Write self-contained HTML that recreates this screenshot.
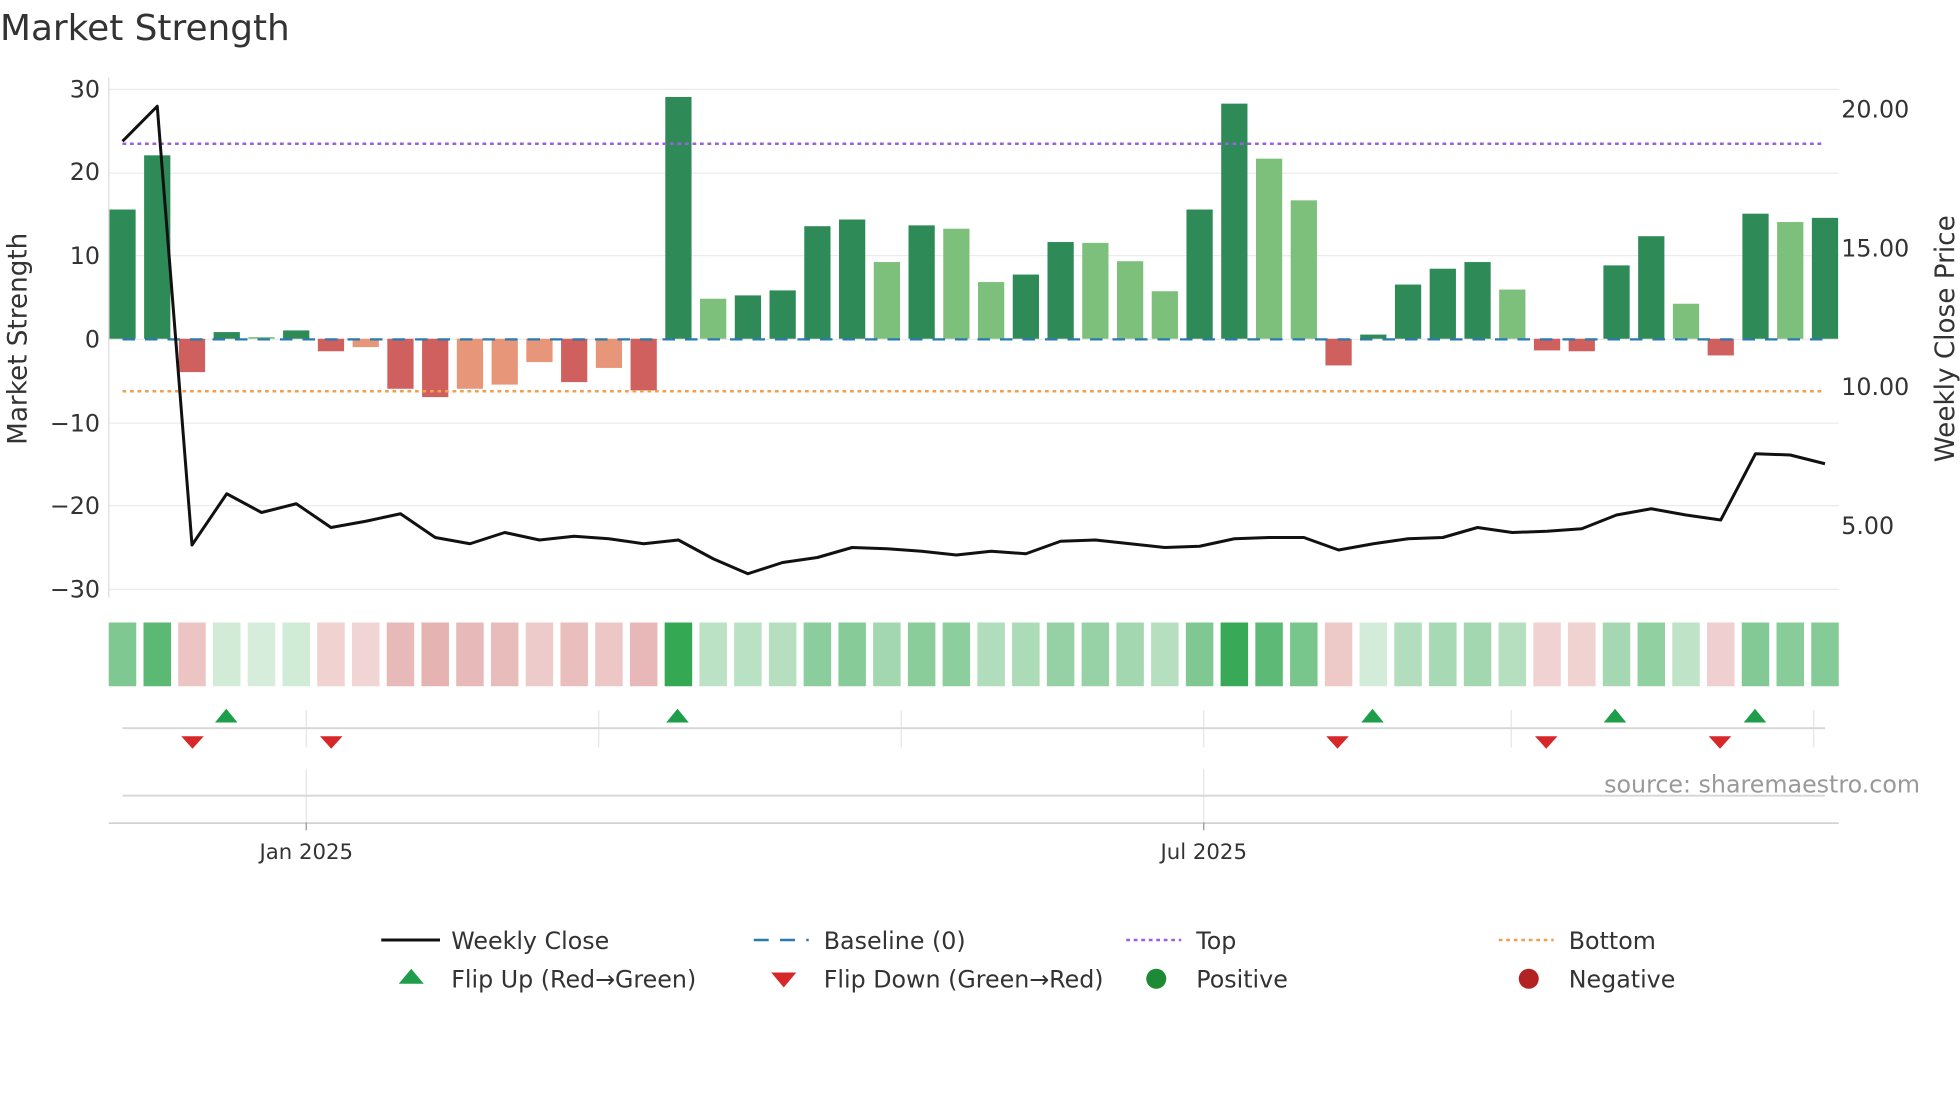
<!DOCTYPE html>
<html><head><meta charset="utf-8"><style>
html,body{margin:0;padding:0;background:#fff;}
svg{display:block;font-family:"DejaVu Sans","Liberation Sans",sans-serif;}
</style></head><body>
<svg id="s" width="1960" height="1102" viewBox="0 0 1568 881.6" xmlns="http://www.w3.org/2000/svg">
<text x="0" y="32" font-size="28.7" fill="#333">Market Strength</text>
<g id="grid" stroke="#ebebeb" stroke-width="1"></g>
<g id="bars"></g>
<line x1="98" x2="1460" y1="115" y2="115" stroke="#9b5fe0" stroke-width="2" stroke-dasharray="3,3"/>
<line x1="98" x2="1460" y1="313" y2="313" stroke="#f0a050" stroke-width="2" stroke-dasharray="3,3"/>
<line x1="98" x2="1460" y1="271.5" y2="271.5" stroke="#2a7ab0" stroke-width="1.8" stroke-dasharray="10,8"/>
<polyline id="price" fill="none" stroke="#111" stroke-width="2.4" stroke-linejoin="round"/>
<line x1="87" x2="87" y1="62" y2="478" stroke="#ddd"/>
<g font-size="19" fill="#333" text-anchor="end">
<text x="80" y="78">30</text><text x="80" y="144">20</text><text x="80" y="211">10</text><text x="80" y="278">0</text>
<text x="80" y="345">−10</text><text x="80" y="411">−20</text><text x="80" y="478">−30</text>
</g>
<g font-size="19" fill="#333">
<text x="1473" y="94">20.00</text><text x="1473" y="205">15.00</text><text x="1473" y="316">10.00</text><text x="1473" y="427">5.00</text>
</g>
<text transform="translate(21,271) rotate(-90)" font-size="21" fill="#333" text-anchor="middle">Market Strength</text>
<text transform="translate(1563,271) rotate(-90)" font-size="21" fill="#333" text-anchor="middle">Weekly Close Price</text>
<g id="heat"></g>
<g stroke="#e6e6e6" stroke-width="1">
<line x1="245" x2="245" y1="568" y2="598"/><line x1="479" x2="479" y1="568" y2="598"/><line x1="721" x2="721" y1="568" y2="598"/>
<line x1="963" x2="963" y1="568" y2="598"/><line x1="1209" x2="1209" y1="568" y2="598"/><line x1="1451" x2="1451" y1="568" y2="598"/>
<line x1="245" x2="245" y1="615" y2="665"/><line x1="963" x2="963" y1="615" y2="665"/>
</g>
<line x1="98" x2="1460" y1="582.5" y2="582.5" stroke="#d6d6d6" stroke-width="1.5"/>
<line x1="98" x2="1460" y1="636.5" y2="636.5" stroke="#d6d6d6" stroke-width="1.5"/>
<line x1="87" x2="1471" y1="658.5" y2="658.5" stroke="#ccc" stroke-width="1.2"/>
<line x1="245" x2="245" y1="658" y2="664" stroke="#999"/><line x1="963" x2="963" y1="658" y2="664" stroke="#999"/>
<g id="flips"></g>
<text x="1536" y="634" font-size="19" fill="#999" text-anchor="end">source: sharemaestro.com</text>
<g font-size="17" fill="#333" text-anchor="middle"><text x="245" y="687">Jan 2025</text><text x="963" y="687">Jul 2025</text></g>
<g font-size="19" fill="#333">
<line x1="305" x2="352" y1="752" y2="752" stroke="#111" stroke-width="2.4"/><text x="361" y="759">Weekly Close</text>
<line x1="603" x2="647" y1="752" y2="752" stroke="#2a7ab0" stroke-width="2" stroke-dasharray="12,9"/><text x="659" y="759">Baseline (0)</text>
<line x1="901" x2="945" y1="752" y2="752" stroke="#9b5fe0" stroke-width="2" stroke-dasharray="3,3"/><text x="957" y="759">Top</text>
<line x1="1199" x2="1243" y1="752" y2="752" stroke="#f0a050" stroke-width="2" stroke-dasharray="3,3"/><text x="1255" y="759">Bottom</text>
<polygon points="319,787 329,775 339,787" fill="#1e9e4a"/><text x="361" y="790">Flip Up (Red→Green)</text>
<polygon points="617,778 637,778 627,790" fill="#d62828"/><text x="659" y="790">Flip Down (Green→Red)</text>
<circle cx="925" cy="783" r="8" fill="#1e8a35"/><text x="957" y="790">Positive</text>
<circle cx="1223" cy="783" r="8" fill="#b22222"/><text x="1255" y="790">Negative</text>
</g>
</svg>
<script>
var NS="http://www.w3.org/2000/svg";
function el(p,t,a){var e=document.createElementNS(NS,t);for(var k in a)e.setAttribute(k,a[k]);document.getElementById(p).appendChild(e);return e;}
[71,138,204,271,338,404,471].forEach(function(y){el("grid","line",{x1:87,x2:1471,y1:y+.5,y2:y+.5});});
var v=[15.5,22,-4,0.8,0.2,1,-1.5,-1,-6,-7,-6,-5.5,-2.8,-5.2,-3.5,-6.2,29,4.8,5.2,5.8,13.5,14.3,9.2,13.6,13.2,6.8,7.7,11.6,11.5,9.3,5.7,15.5,28.2,21.6,16.6,-3.2,0.5,6.5,8.4,9.2,5.9,-1.4,-1.5,8.8,12.3,4.2,-2,15,14,14.5];
var light={4:1,17:1,22:1,24:1,25:1,28:1,29:1,30:1,33:1,34:1,40:1,45:1,48:1};
var salmon={7:1,10:1,11:1,12:1,14:1};
var py=[113,85,436,395,410,403,422,417,411,430,435,426,432,429,431,435,432,447,459,450,446,438,439,441,444,441,443,433,432,435,438,437,431,430,430,440,435,431,430,422,426,425,423,412,407,412,416,363,364,371];
var pts=[];
function mix(a,b,t){var r=[];for(var i=0;i<3;i++)r.push(Math.round(a[i]+(b[i]-a[i])*t));return "rgb("+r.join(",")+")";}
for(var i=0;i<50;i++){
 var cx=98+i*(1362/49);
 var h=v[i]*6.67, y=h>=0?271-h:271;
 var c=v[i]>=0?(light[i]?"#7dc07c":"#2e8b57"):(salmon[i]?"#e8967a":"#d0605e");
 el("bars","rect",{x:cx-10.5,y:y,width:21,height:Math.abs(h),fill:c});
 var hc=v[i]>=0?mix([214,237,219],[52,168,83],Math.min(1,v[i]/29)):mix([243,218,218],[229,180,178],Math.min(1,-v[i]/7));
 el("heat","rect",{x:cx-11,y:498,width:22,height:51,fill:hc});
 pts.push(cx.toFixed(1)+","+py[i]);
}
document.getElementById("price").setAttribute("points",pts.join(" "));
[181,542,1098,1292,1404].forEach(function(x){el("flips","polygon",{points:(x-9)+",578 "+x+",567 "+(x+9)+",578",fill:"#1e9e4a"});});
[154,265,1070,1237,1376].forEach(function(x){el("flips","polygon",{points:(x-9)+",589 "+(x+9)+",589 "+x+",599",fill:"#d62828"});});
</script>
</body></html>
